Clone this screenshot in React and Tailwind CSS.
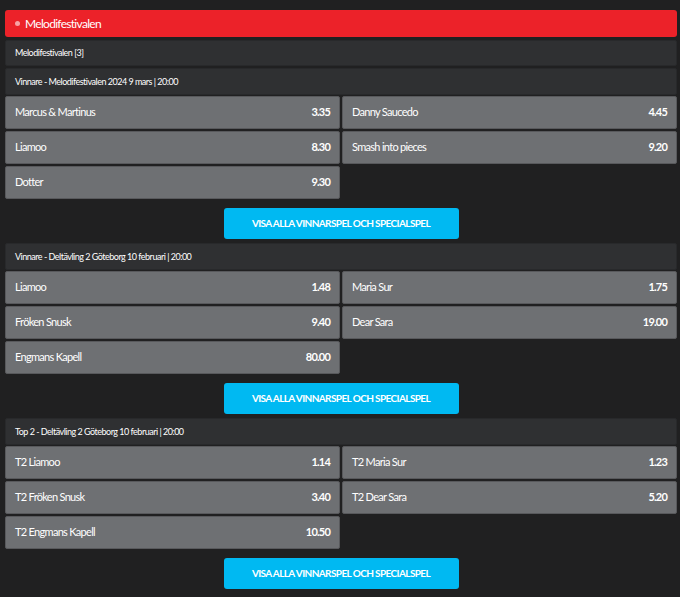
const sections = [
  {
    title: 'Vinnare - Melodifestivalen 2024 9 mars | 20:00',
    odds: [
      ['Marcus & Martinus', '3.35'],
      ['Danny Saucedo', '4.45'],
      ['Liamoo', '8.30'],
      ['Smash into pieces', '9.20'],
      ['Dotter', '9.30'],
    ],
  },
  {
    title: 'Vinnare - Deltävling 2 Göteborg 10 februari | 20:00',
    odds: [
      ['Liamoo', '1.48'],
      ['Maria Sur', '1.75'],
      ['Fröken Snusk', '9.40'],
      ['Dear Sara', '19.00'],
      ['Engmans Kapell', '80.00'],
    ],
  },
  {
    title: 'Top 2 - Deltävling 2 Göteborg 10 februari | 20:00',
    odds: [
      ['T2 Liamoo', '1.14'],
      ['T2 Maria Sur', '1.23'],
      ['T2 Fröken Snusk', '3.40'],
      ['T2 Dear Sara', '5.20'],
      ['T2 Engmans Kapell', '10.50'],
    ],
  },
];

const OddsButton = ({ name, price }) => (
  <div className="flex h-[33px] items-center justify-between rounded-[2px] border border-[#58595c] bg-[#6e7073] pl-[9px] pr-[9px] text-[11px] text-white">
    <span className="tracking-[-0.7px]">{name}</span>
    <span className="font-bold tracking-[-0.8px]">{price}</span>
  </div>
);

const Section = ({ title, odds }) => (
  <div className="flex flex-col">
    <div className="flex h-[27px] items-center rounded-[2px] border border-[#28292b] bg-[#2f3032] pl-[9px] text-[9px] tracking-[-0.5px] text-white">
      {title}
    </div>
    <div className="mt-px grid grid-cols-2 gap-[2px]">
      {odds.map(([name, price]) => (
        <OddsButton key={name} name={name} price={price} />
      ))}
    </div>
    <div className="mt-[9px] mb-[4px] flex justify-center">
      <button className="h-[31px] w-[235px] rounded-[3px] bg-[#00b9f2] text-[10px] font-bold tracking-[-0.6px] text-white">
        VISA ALLA VINNARSPEL OCH SPECIALSPEL
      </button>
    </div>
  </div>
);

export default function App() {
  return (
    <div
      className="min-h-[597px] bg-[#202021] pt-[10px]"
      style={{ fontFamily: 'Lato, "Liberation Sans", sans-serif' }}
    >
      <div className="ml-[5px] mr-[3px] flex flex-col">
        <div className="flex h-[27px] items-center rounded-[3px] bg-[#ec2229] pl-[10px] text-[12px] tracking-[-0.7px] text-white">
          <span className="mr-[5px] h-[5px] w-[5px] rounded-full bg-[#f7a3a5]" />
          Melodifestivalen
        </div>
        <div className="mt-[3px] flex h-[26px] items-center rounded-[2px] border border-[#28292b] bg-[#2f3032] pl-[9px] text-[9px] tracking-[-0.5px] text-white">
          Melodifestivalen [3]
        </div>
        <div className="mt-[2px] flex flex-col">
          {sections.map((s) => (
            <Section key={s.title} title={s.title} odds={s.odds} />
          ))}
        </div>
      </div>
    </div>
  );
}
